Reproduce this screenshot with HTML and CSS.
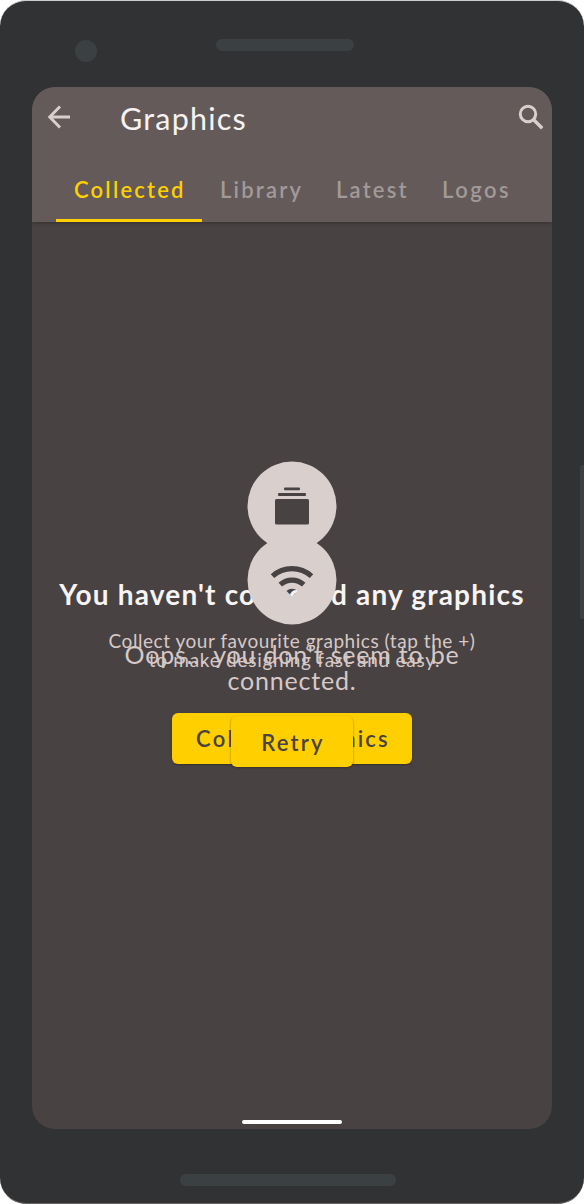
FILE: index.html
```html
<!DOCTYPE html>
<html lang="en">
<head>
<meta charset="utf-8">
<title>Graphics</title>
<link rel="stylesheet" href="styles.css">
</head>
<body>
<div class="phone">
  <div class="bezel-top"><span class="camera"></span><span class="speaker"></span></div>
  <main class="screen">
    <header class="app-bar">
      <div class="title-row">
        <svg class="back" width="24" height="24" viewBox="0 0 24 24"><path d="M13 1.500 2.700 12 13 22.500M3 12H23" fill="none" stroke="currentColor" stroke-width="2.900"/></svg>
        <h1 class="title">Graphics</h1>
        <svg class="search" width="26" height="26" viewBox="0 0 26 26"><circle cx="10" cy="10" r="7.700" fill="none" stroke="currentColor" stroke-width="3"/><path d="M15.700 15.700 24.200 24.200" stroke="currentColor" stroke-width="3.400"/></svg>
      </div>
      <nav class="tabs">
        <span class="tab active">Collected</span>
        <span class="tab library">Library</span>
        <span class="tab latest">Latest</span>
        <span class="tab logos">Logos</span>
      </nav>
    </header>
    <div class="content">
      <section class="state empty">
        <svg class="badge" width="90" height="90" viewBox="0 0 90 90"><circle cx="45" cy="45" r="44.500" fill="#d9cfcd"/><g fill="#494242"><rect x="37" y="26.500" width="16" height="2.800" rx="1"/><rect x="31" y="32" width="28" height="3" rx="1"/><rect x="28" y="38" width="34" height="25.500" rx="1.500"/></g></svg>
        <h2 class="heading">You haven't collected any graphics</h2>
        <p class="hint"><span class="hint-a">Collect your favourite graphics (tap the +)</span><span class="hint-b">to make designing fast and easy.</span></p>
        <button class="button collect">Collect Graphics</button>
      </section>
      <section class="state offline">
        <svg class="badge" width="90" height="90" viewBox="0 0 90 90">
          <defs><mask id="wifi"><rect width="90" height="90" fill="#fff"/><g fill="none" stroke="#000" stroke-width="5.200"><path d="M25.500 41.200A29 29 0 0 1 64.500 41.200"/><path d="M33.300 49.600A17.500 17.500 0 0 1 56.700 49.600"/></g><path d="M39.500 56A8 8 0 0 1 50.500 56L45 61.500Z" fill="#000"/></mask></defs>
          <circle cx="45" cy="45" r="44.500" fill="#d9cfcd" mask="url(#wifi)"/>
        </svg>
        <p class="message"><span class="message-a">Oops... you don't seem to be</span><span class="message-b">connected.</span></p>
        <button class="button retry">Retry</button>
      </section>
    </div>
    <div class="home-bar"></div>
  </main>
  <div class="bezel-bottom"></div>
  <span class="side-key"></span>
</div>
</body>
</html>
```
FILE: styles.css
```css
* { box-sizing: border-box; }
body { margin: 0; background: #fff; font-family: Lato, "Open Sans", sans-serif; }
h1, h2, p { margin: 0; font-weight: 400; }
.phone { position: relative; width: 584px; height: 1204px; padding: 0 32px; overflow: hidden; background: #313233; border-top: 1px solid #c9cecd; border-bottom: 1px solid #686465; border-radius: 26px; }
.bezel-top { height: 86px; display: flex; align-items: flex-start; padding: 38px 0 0 43px; }
.camera { width: 22px; height: 22px; margin-top: 1px; border-radius: 50%; background: #3b4142; }
.speaker { width: 138px; height: 12px; margin-left: 119px; border-radius: 6px; background: #3b4142; }
.screen { height: 1042px; display: flex; flex-direction: column; border-radius: 23px; overflow: hidden; background: #494242; }
.app-bar { height: 135px; flex: none; display: flex; flex-direction: column; background: #645a5a; box-shadow: 0 1px 3px #352f2f; z-index: 1; }
.title-row { height: 64px; display: flex; align-items: center; padding: 0 8px 0 15px; color: #d9cfcd; }
.back { margin-top: -4px; }
.search { margin-left: auto; margin-top: -5px; }
.title { margin-left: 49px; font-size: 30.500px; line-height: 62px; padding-bottom: 2px; letter-spacing: 1.200px; color: #f5f2f1; white-space: nowrap; }
.tabs { flex: 1; display: flex; padding-left: 24px; }
.tab { height: 71px; padding: 0 16px 0 18px; font-size: 22px; font-weight: 600; line-height: 78px; letter-spacing: 2.200px; color: #a29999; white-space: nowrap; }
.tab.active { width: 146px; color: #fed000; border-bottom: 3px solid #fed000; }
.library { width: 116px; }
.latest { width: 106px; }
.logos { letter-spacing: 2.500px; }
.content { flex: 1; display: grid; grid-template-columns: 520px; align-items: start; }
.state { grid-area: 1 / 1; display: flex; flex-direction: column; align-items: center; padding-top: 239px; }
.state.offline { padding-top: 313px; z-index: 1; }
.badge { flex: none; display: block; }
.heading { margin-top: 27px; font-size: 28px; font-weight: 700; line-height: 33px; letter-spacing: 1.180px; color: #f7f4f3; white-space: nowrap; }
.hint, .message { display: flex; flex-direction: column; align-items: center; white-space: nowrap; color: #d6c9c7; }
.hint { margin-top: 20px; font-size: 19px; line-height: 19px; }
.hint-a { letter-spacing: 0.540px; }
.hint-b { padding-left: 5px; letter-spacing: 0.740px; }
.message { margin-top: 16px; font-size: 25px; line-height: 26px; letter-spacing: 0.800px; }
.button { height: 51px; padding: 0 0 0 2px; border: 0; border-radius: 6px; background: #ffcf00; box-shadow: 0 1px 2px #29231f99; color: #494242; font: 600 22px/51px Lato, "Open Sans", sans-serif; letter-spacing: 2.200px; white-space: nowrap; }
.collect { width: 240px; margin-top: 44px; }
.retry { width: 122px; margin-top: 23px; padding-top: 1px; }
.home-bar { width: 100px; height: 4px; margin: 0 auto 5px; flex: none; border-radius: 2px; background: #fff; }
.bezel-bottom { width: 216px; height: 12px; margin: 45px auto 0 148px; border-radius: 6px; background: #3b4142; }
.side-key { position: absolute; right: 0; top: 464px; width: 4px; height: 154px; border-radius: 3px 0 0 3px; background: #3b4142; }
```
